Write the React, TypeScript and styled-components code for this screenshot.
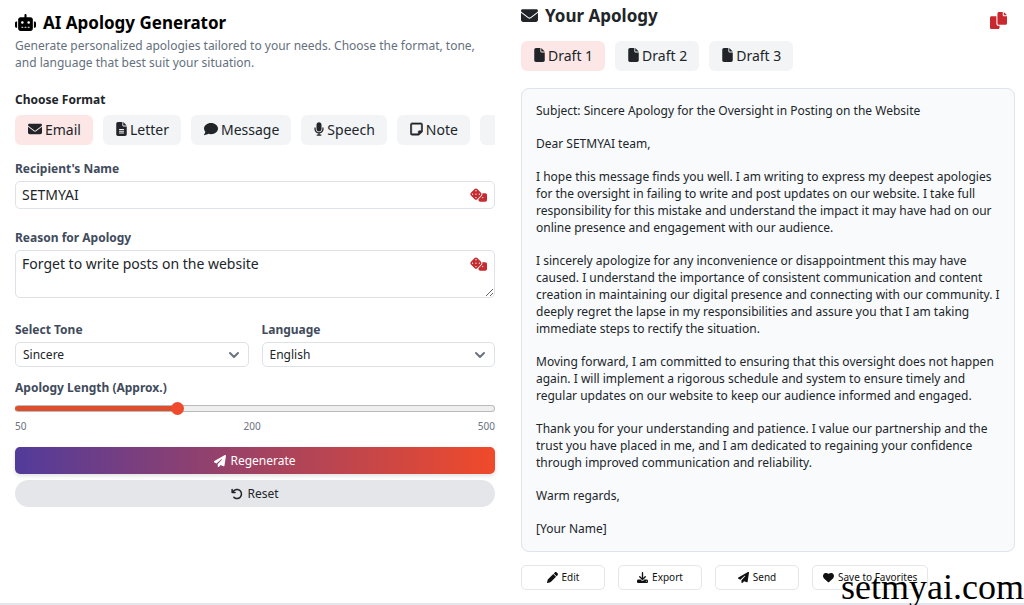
import React, { useState } from "react";
import styled, { createGlobalStyle } from "styled-components";
import {
  FaRobot,
  FaEnvelope,
  FaFileLines,
  FaComment,
  FaMicrophone,
  FaRegNoteSticky,
  FaDice,
  FaPaperPlane,
  FaArrowRotateLeft,
  FaFile,
  FaPen,
  FaDownload,
  FaHeart,
} from "react-icons/fa6";

const Global = createGlobalStyle`
  *, *::before, *::after { box-sizing: border-box; }
  body {
    margin: 0;
    background: #fff;
    color: #212529;
    font-family: "Noto Sans", "Open Sans", sans-serif;
    font-size: 12px;
    line-height: 17px;
  }
  button, input, select, textarea { font: inherit; color: inherit; margin: 0; }
  button { cursor: pointer; border: 0; padding: 0; background: none; }
  h1, h2, p { margin: 0; }
  svg { flex: none; display: block; }
`;

const Page = styled.main`
  position: relative;
  display: grid;
  grid-template-columns: minmax(0, 1fr) minmax(0, 1fr);
  min-height: 100vh;
  border-bottom: 2px solid #e3e6ec;
`;

const FormPanel = styled.form`
  display: flex;
  flex-direction: column;
  padding: 12px 17px 0 15px;
`;

const ResultPanel = styled.section`
  display: flex;
  flex-direction: column;
  padding: 5px 9px 0;
`;

const Glyph = styled.span<{ $width: number; $height?: number }>`
  flex: none;
  display: block;
  svg {
    width: ${(p) => p.$width}px;
    height: ${(p) => p.$height ?? 14}px;
  }
`;

const Title = styled.h1`
  display: flex;
  align-items: center;
  gap: 7px;
  font-size: 17px;
  line-height: 21px;
  font-weight: 700;
  color: #000;
`;

const SubTitle = styled.h2`
  display: flex;
  align-items: center;
  gap: 7px;
  font-size: 17px;
  line-height: 21px;
  font-weight: 700;
`;

const Intro = styled.p`
  margin-top: 4px;
  color: #64707d;
`;

const Field = styled.div<{ $top: number }>`
  display: flex;
  flex-direction: column;
  margin-top: ${(p) => p.$top}px;
`;

const Label = styled.label`
  margin-bottom: 4px;
  font-weight: 700;
  color: #414b5c;
`;

const GroupLabel = styled.div`
  margin: 20px 0 7px;
  font-weight: 700;
`;

const ChipRow = styled.div`
  display: flex;
  gap: 10px;
  overflow: hidden;
`;

const Chip = styled.button<{ $active?: boolean }>`
  display: flex;
  flex: none;
  align-items: center;
  gap: 3px;
  min-width: 60px;
  height: 30px;
  padding: 0 12px 2px 13px;
  border-radius: 6px;
  font-size: 14px;
  background: ${(p) => (p.$active ? "#fde6e6" : "#f2f4f6")};
`;

const BoldNote = styled(FaRegNoteSticky)`
  stroke: currentColor;
  stroke-width: 20px;
`;

const InputWrap = styled.div`
  position: relative;
  display: flex;
`;

const TextInput = styled.input`
  width: 100%;
  height: 28px;
  padding: 0 36px 1px 6px;
  border: 1px solid #dee2e6;
  border-radius: 5px;
  font-size: 14px;
  background: #fff;
`;

const TextArea = styled.textarea`
  width: 100%;
  height: 48px;
  padding: 4px 36px 4px 6px;
  border: 1px solid #dee2e6;
  border-radius: 5px;
  font-size: 14px;
  background: #fff;
  resize: vertical;
`;

const DiceButton = styled.button`
  position: absolute;
  top: 7px;
  right: 8px;
  color: #c62b2f;
`;

const SelectRow = styled.div`
  display: grid;
  grid-template-columns: 1fr 1fr;
  gap: 13px;
`;

const Select = styled.select`
  width: 100%;
  height: 25px;
  padding: 0 30px 1px 7px;
  border: 1px solid #dee2e6;
  border-radius: 5px;
  background: #fff;
  appearance: none;
`;

const Chevron = styled.svg`
  position: absolute;
  top: 9px;
  right: 9px;
  pointer-events: none;
`;

const Range = styled.input<{ $fill: number }>`
  width: 100%;
  height: 16px;
  appearance: none;
  background: transparent;
  &::-webkit-slider-runnable-track {
    height: 7px;
    border: 1px solid #b9babc;
    border-radius: 4px;
    background: linear-gradient(#dd4f2c, #dd4f2c) left / ${(p) => p.$fill}% 100% no-repeat border-box, #efefef;
    border-left-color: #dd4f2c;
  }
  &::-webkit-slider-thumb {
    appearance: none;
    width: 13px;
    height: 13px;
    margin-top: -4px;
    border-radius: 50%;
    background: #ee4a2b;
  }
`;

const Scale = styled.div`
  display: flex;
  justify-content: space-between;
  margin-top: 2px;
  font-size: 10px;
  color: #6b7280;
`;

const WideButton = styled.button`
  display: flex;
  align-items: center;
  justify-content: center;
  gap: 4px;
  height: 27px;
`;

const Regenerate = styled(WideButton)`
  margin-top: 12px;
  border-radius: 5px;
  color: #fff;
  background: linear-gradient(90deg, #523b9b, #f04a2a);
  box-shadow: 0 2px 4px rgba(0, 0, 0, 0.12);
`;

const Reset = styled(WideButton)`
  margin-top: 6px;
  border-radius: 14px;
  background: #e5e6ea;
`;

const ResultHeader = styled.header`
  display: flex;
  justify-content: space-between;
  align-items: flex-start;
`;

const CopyButton = styled.button`
  margin: 7px 8px 0 0;
  color: #c9292e;
`;

const Drafts = styled.div`
  display: flex;
  gap: 10px;
  margin: 12px 0 17px;
`;

const Letter = styled.article`
  display: flex;
  flex-direction: column;
  gap: 16px;
  padding: 13px 14px 14px;
  border: 1px solid #dfe4ea;
  border-radius: 8px;
  background: #f8fafc;
`;

const Actions = styled.div`
  display: flex;
  gap: 13px;
  margin-top: 13px;
`;

const ActionButton = styled.button`
  display: flex;
  align-items: center;
  justify-content: center;
  gap: 4px;
  min-width: 84px;
  height: 25px;
  padding: 0 10px;
  border: 1px solid #e4e6ea;
  border-radius: 5px;
  font-size: 10px;
  color: #111;
  background: #fff;
`;

const Watermark = styled.div`
  position: absolute;
  right: 0;
  bottom: -4px;
  font-family: "Liberation Serif", serif;
  font-size: 36px;
  line-height: 40px;
  color: #000;
  pointer-events: none;
`;

const formats = [
  { name: "Email", icon: FaEnvelope, width: 14 },
  { name: "Letter", icon: FaFileLines, width: 11 },
  { name: "Message", icon: FaComment, width: 14 },
  { name: "Speech", icon: FaMicrophone, width: 10 },
  { name: "Note", icon: BoldNote, width: 13 },
];

const actions = [
  { name: "Edit", icon: FaPen },
  { name: "Export", icon: FaDownload },
  { name: "Send", icon: FaPaperPlane },
  { name: "Save to Favorites", icon: FaHeart },
];

const paragraphs = [
  "Subject: Sincere Apology for the Oversight in Posting on the Website",
  "Dear SETMYAI team,",
  "I hope this message finds you well. I am writing to express my deepest apologies for the oversight in failing to write and post updates on our website. I take full responsibility for this mistake and understand the impact it may have had on our online presence and engagement with our audience.",
  "I sincerely apologize for any inconvenience or disappointment this may have caused. I understand the importance of consistent communication and content creation in maintaining our digital presence and connecting with our community. I deeply regret the lapse in my responsibilities and assure you that I am taking immediate steps to rectify the situation.",
  "Moving forward, I am committed to ensuring that this oversight does not happen again. I will implement a rigorous schedule and system to ensure timely and regular updates on our website to keep our audience informed and engaged.",
  "Thank you for your understanding and patience. I value our partnership and the trust you have placed in me, and I am dedicated to regaining your confidence through improved communication and reliability.",
  "Warm regards,",
  "[Your Name]",
];

function CopyIcon() {
  return (
    <svg width="17" height="17" viewBox="0 0 512 512" fill="currentColor">
      <path d="M384 96V0H272c-26.500 0-48 21.500-48 48v288c0 26.500 21.500 48 48 48h192c26.500 0 48-21.500 48-48V128h-96c-17.600 0-32-14.400-32-32zM416 0v96h96L416 0zM192 352V128H48c-26.500 0-48 21.500-48 48v288c0 26.500 21.500 48 48 48h192c26.500 0 48-21.500 48-48v-48h-32c-35.300 0-64-28.700-64-64z" />
    </svg>
  );
}

function RandomButton({ label }: { label: string }) {
  return (
    <DiceButton type="button" aria-label={label}>
      <Glyph $width={17}>
        <FaDice />
      </Glyph>
    </DiceButton>
  );
}

function DropDown({ id, label, options }: { id: string; label: string; options: string[] }) {
  return (
    <Field $top={0}>
      <Label htmlFor={id}>{label}</Label>
      <InputWrap>
        <Select id={id}>
          {options.map((o) => (
            <option key={o}>{o}</option>
          ))}
        </Select>
        <Chevron width="12" height="9" viewBox="0 0 12 9" fill="none" stroke="#6b7280" strokeWidth="2" strokeLinecap="round" strokeLinejoin="round">
          <path d="M2 2l4 4 4-4" />
        </Chevron>
      </InputWrap>
    </Field>
  );
}

export default function App() {
  const [format, setFormat] = useState("Email");
  const [draft, setDraft] = useState(1);
  const [length, setLength] = useState(200);

  return (
    <>
      <Global />
      <Page>
        <FormPanel onSubmit={(e) => e.preventDefault()}>
          <Title>
            <Glyph $width={21} $height={17}>
              <FaRobot />
            </Glyph>
            AI Apology Generator
          </Title>
          <Intro>
            Generate personalized apologies tailored to your needs. Choose the format, tone, and language that best suit your situation.
          </Intro>

          <GroupLabel>Choose Format</GroupLabel>
          <ChipRow>
            {formats.map(({ name, icon: Icon, width }) => (
              <Chip key={name} type="button" $active={format === name} onClick={() => setFormat(name)}>
                <Glyph $width={width}>
                  <Icon />
                </Glyph>
                {name}
              </Chip>
            ))}
            <Chip type="button" aria-label="More formats" />
          </ChipRow>

          <Field $top={15}>
            <Label htmlFor="recipient">Recipient's Name</Label>
            <InputWrap>
              <TextInput id="recipient" defaultValue="SETMYAI" />
              <RandomButton label="Random name" />
            </InputWrap>
          </Field>

          <Field $top={20}>
            <Label htmlFor="reason">Reason for Apology</Label>
            <InputWrap>
              <TextArea id="reason" defaultValue="Forget to write posts on the website" />
              <RandomButton label="Random reason" />
            </InputWrap>
          </Field>

          <Field $top={23}>
            <SelectRow>
              <DropDown id="tone" label="Select Tone" options={["Sincere"]} />
              <DropDown id="language" label="Language" options={["English"]} />
            </SelectRow>
          </Field>

          <Field $top={12}>
            <Label htmlFor="length">Apology Length (Approx.)</Label>
            <Range
              id="length"
              type="range"
              min={50}
              max={500}
              value={length}
              $fill={((length - 50) / 450) * 100}
              onChange={(e) => setLength(Number(e.target.value))}
            />
            <Scale>
              <span>50</span>
              <span>200</span>
              <span>500</span>
            </Scale>
          </Field>

          <Regenerate type="submit">
            <FaPaperPlane size={12} />
            Regenerate
          </Regenerate>
          <Reset type="reset">
            <FaArrowRotateLeft size={12} />
            Reset
          </Reset>
        </FormPanel>

        <ResultPanel>
          <ResultHeader>
            <SubTitle>
              <FaEnvelope size={17} />
              Your Apology
            </SubTitle>
            <CopyButton type="button" aria-label="Copy">
              <CopyIcon />
            </CopyButton>
          </ResultHeader>
          <Drafts>
            {[1, 2, 3].map((n) => (
              <Chip key={n} type="button" $active={draft === n} onClick={() => setDraft(n)}>
                <Glyph $width={11}>
                  <FaFile />
                </Glyph>
                Draft {n}
              </Chip>
            ))}
          </Drafts>
          <Letter>
            {paragraphs.map((text) => (
              <p key={text}>{text}</p>
            ))}
          </Letter>
          <Actions>
            {actions.map(({ name, icon: Icon }) => (
              <ActionButton key={name} type="button">
                <Icon size={11} />
                {name}
              </ActionButton>
            ))}
          </Actions>
        </ResultPanel>
        <Watermark>setmyai.com</Watermark>
      </Page>
    </>
  );
}
